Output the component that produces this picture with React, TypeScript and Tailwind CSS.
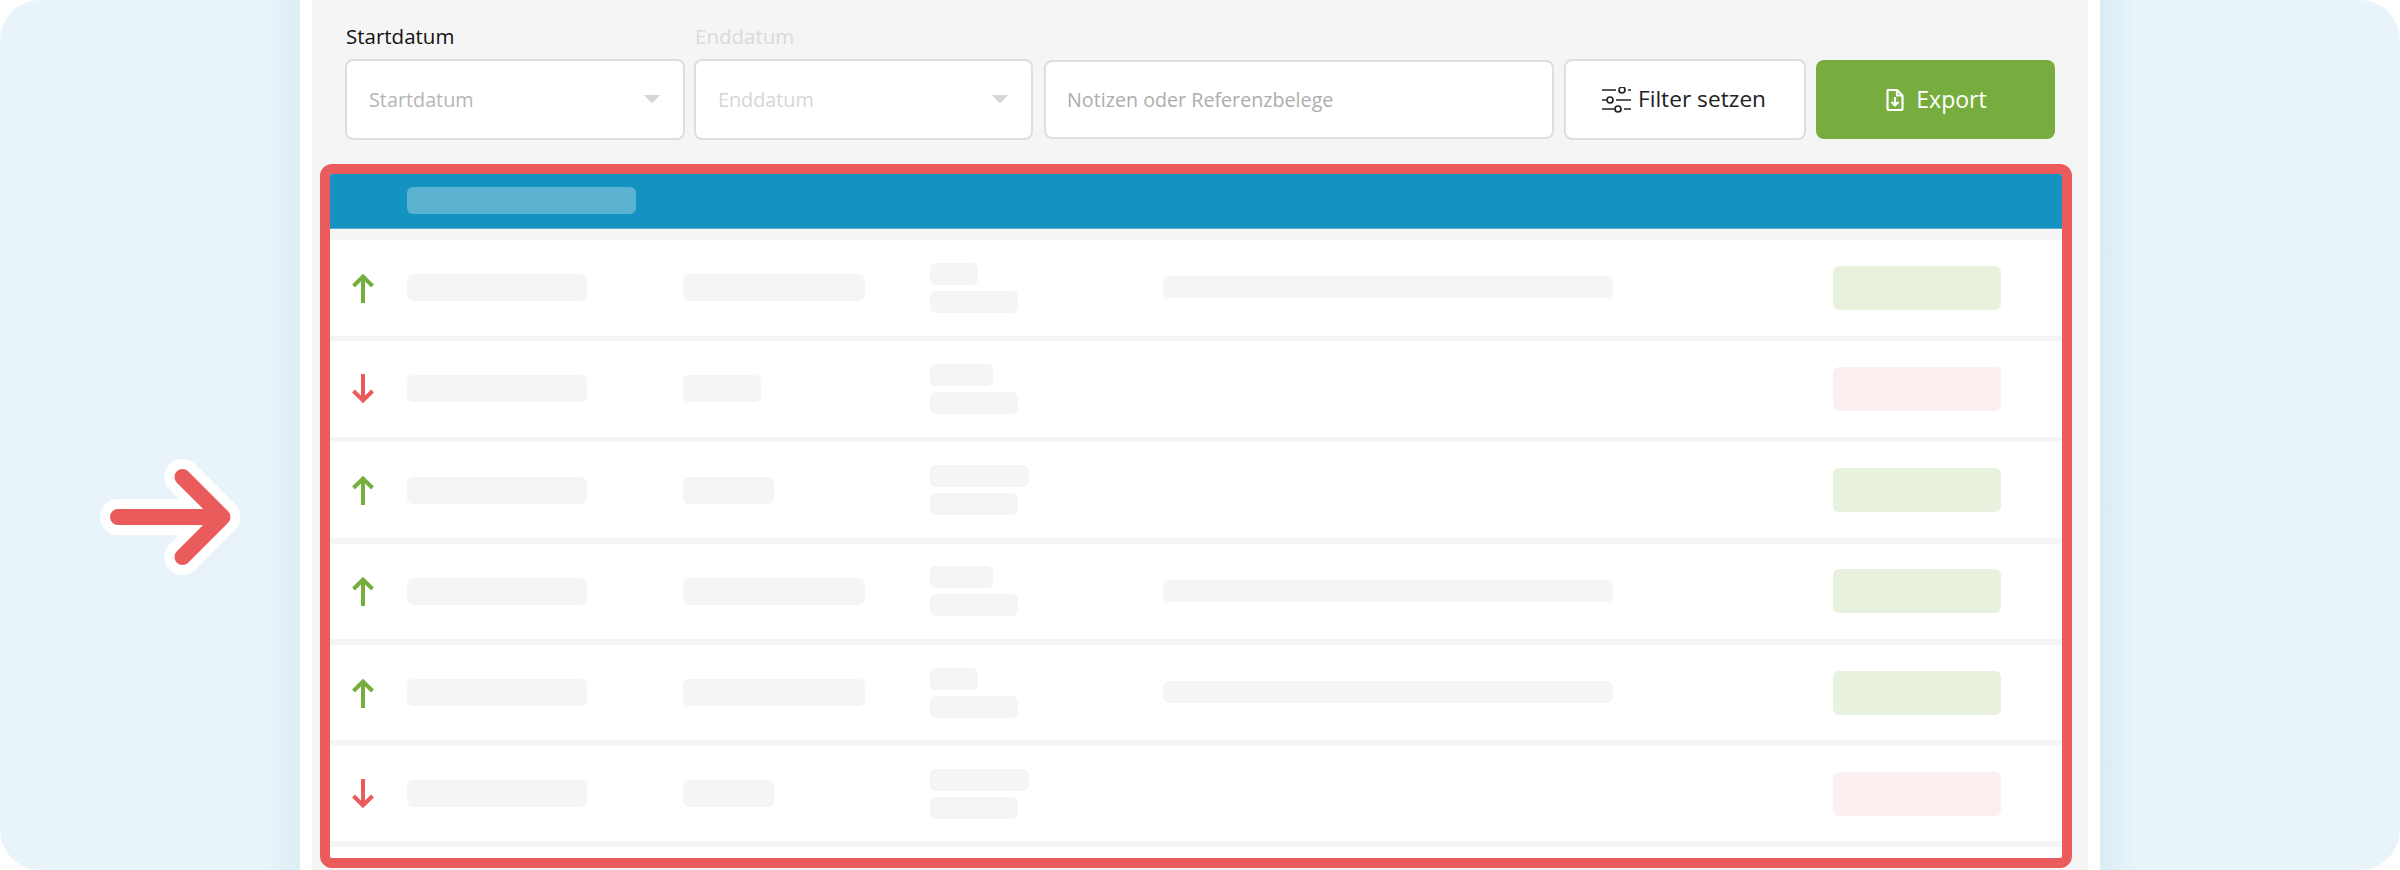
const rows = [
  { dir: 'up', col2: 'w-[182px]', top: 'w-[48px]', notes: true },
  { dir: 'down', col2: 'w-[78px]', top: 'w-[63px]', notes: false },
  { dir: 'up', col2: 'w-[91px]', top: 'w-[99px]', notes: false },
  { dir: 'up', col2: 'w-[182px]', top: 'w-[63px]', notes: true },
  { dir: 'up', col2: 'w-[182px]', top: 'w-[48px]', notes: true },
  { dir: 'down', col2: 'w-[91px]', top: 'w-[99px]', notes: false },
]

function TrendArrow({ dir }: { dir: string }) {
  if (dir === 'up') {
    return (
      <svg width="22" height="30" viewBox="0 0 22 30" fill="none" stroke="#76ae3d" strokeWidth="4" className="ml-[22px]">
        <path d="M11 30V3" />
        <path d="M1.500 13L11 3.500L20.500 13" />
      </svg>
    )
  }
  return (
    <svg width="22" height="30" viewBox="0 0 22 30" fill="none" stroke="#ea5b5b" strokeWidth="4" className="ml-[22px]">
      <path d="M11 0V27" />
      <path d="M1.500 17L11 26.500L20.500 17" />
    </svg>
  )
}

function Caret() {
  return (
    <svg width="18" height="9" viewBox="0 0 18 9" className="shrink-0">
      <path d="M1 0H17L9 8.500Z" fill="#d6d6d6" />
    </svg>
  )
}

function TableRow({ row }: { row: (typeof rows)[number] }) {
  return (
    <div className="grid h-[95.5px] grid-cols-[77px_276px_247px_233px_670px_168px] items-center bg-white">
      <TrendArrow dir={row.dir} />
      <div className="h-[27px] w-[180px] rounded-[6px] bg-[#f5f5f5]" />
      <div className={`h-[27px] rounded-[6px] bg-[#f5f5f5] ${row.col2}`} />
      <div className="flex flex-col gap-[6px]">
        <div className={`h-[22px] rounded-[6px] bg-[#f5f5f5] ${row.top}`} />
        <div className="h-[22px] w-[88px] rounded-[6px] bg-[#f5f5f5]" />
      </div>
      <div className="mb-[1px]">{row.notes && <div className="h-[22px] w-[450px] rounded-[6px] bg-[#f5f5f5]" />}</div>
      <div className={`h-[44px] rounded-[6px] ${row.dir === 'up' ? 'bg-[#e9f2df]' : 'bg-[#fcefef]'}`} />
    </div>
  )
}

export default function App() {
  return (
    <div className="flex h-[870px] w-[2400px] overflow-hidden bg-white font-['Open_Sans',sans-serif]">
      <div className="h-full w-[300px] shrink-0 rounded-l-[40px] bg-[linear-gradient(to_right,#e8f4fa_88%,#dceef5)] pl-[92px] pt-[458px]">
        <svg width="150" height="118" viewBox="92 458 150 118" fill="none" strokeLinecap="round" strokeLinejoin="round">
          <path d="M118 517H222.500M182.500 477L222.500 517L182.500 557" stroke="#ffffff" strokeWidth="36" />
          <path d="M118 517H222.500M182.500 477L222.500 517L182.500 557" stroke="#ea5b5b" strokeWidth="16" />
        </svg>
      </div>

      <div className="ml-[12px] h-full w-[1776px] shrink-0 bg-[#f5f5f5]">
        <div className="ml-[34px] mt-[22px] flex h-[28px] text-[20.5px] font-medium leading-[28px]">
          <span className="w-[349px] text-[#111111]">Startdatum</span>
          <span className="text-[#dadada]">Enddatum</span>
        </div>

        <div className="ml-[33px] mt-[9px] flex h-[81px] items-center">
          <div className="flex h-[81px] w-[340px] items-center justify-between rounded-[8px] border-2 border-[#dedede] bg-white pl-[22px] pr-[22px] text-[19.8px] text-[#b5b5b5]">
            <span>Startdatum</span>
            <Caret />
          </div>
          <div className="ml-[9px] flex h-[81px] w-[339px] items-center justify-between rounded-[8px] border-2 border-[#dedede] bg-white pl-[22px] pr-[22px] text-[19.8px] text-[#d6d6d6]">
            <span>Enddatum</span>
            <Caret />
          </div>
          <div className="ml-[11px] flex h-[79px] w-[510px] items-center rounded-[8px] border-2 border-[#dedede] bg-white pl-[21px] text-[19.7px] text-[#adadad]">
            Notizen oder Referenzbelege
          </div>
          <div className="ml-[10px] flex h-[81px] w-[242px] items-center justify-center gap-[6px] rounded-[8px] border-2 border-[#dedede] bg-white pr-[2px] text-[22.7px] text-[#222222]">
            <svg width="30" height="26" viewBox="0 0 30 26" fill="none" stroke="#222222" strokeWidth="1.7">
              <path d="M0 3H14M26 3H29" />
              <circle cx="20" cy="3" r="3" />
              <path d="M0 13H4M14 13H29" />
              <circle cx="8" cy="13" r="3" />
              <path d="M0 22H12M22 22H29" />
              <circle cx="16" cy="22" r="3" />
            </svg>
            <span>Filter setzen</span>
          </div>
          <div className="ml-[10px] flex h-[79px] w-[239px] items-center justify-center gap-[12px] rounded-[8px] bg-[#76ad3e] pl-[2px] text-[23px] text-white">
            <svg width="18" height="24" viewBox="0 0 18 24" fill="none" stroke="#ffffff" strokeWidth="2.2" strokeLinejoin="round">
              <path d="M3 2H11L16.500 7.500V21A1 1 0 0 1 15.500 22H2.500A1 1 0 0 1 1.500 21V3A1 1 0 0 1 3 2Z" />
              <path d="M11 2V7.500H16.500" />
              <path d="M9 9V17M5.500 14L9 17.500L12.500 14" />
            </svg>
            <span>Export</span>
          </div>
        </div>

        <div className="ml-[8px] mt-[24px] flex h-[704px] w-[1752px] flex-col overflow-hidden rounded-[12px] border-[10px] border-[#ea5b5b] bg-white">
          <div className="flex h-[55px] items-center border-b border-[#5bb2d1] bg-[#1593c0] pl-[77px]">
            <div className="mb-[1px] h-[27px] w-[229px] rounded-[6px] bg-[#5bb2d1]" />
          </div>
          <div className="h-[11px] bg-[#f5f5f5]" />
          {rows.map((row, i) => (
            <div key={i}>
              <TableRow row={row} />
              <div className="h-[5.7px] bg-[#f5f5f5]" />
            </div>
          ))}
        </div>
      </div>

      <div className="ml-[12px] h-full w-[300px] shrink-0 rounded-r-[40px] bg-[linear-gradient(to_left,#e8f4fa_88%,#d8ecf4)]" />
    </div>
  )
}
